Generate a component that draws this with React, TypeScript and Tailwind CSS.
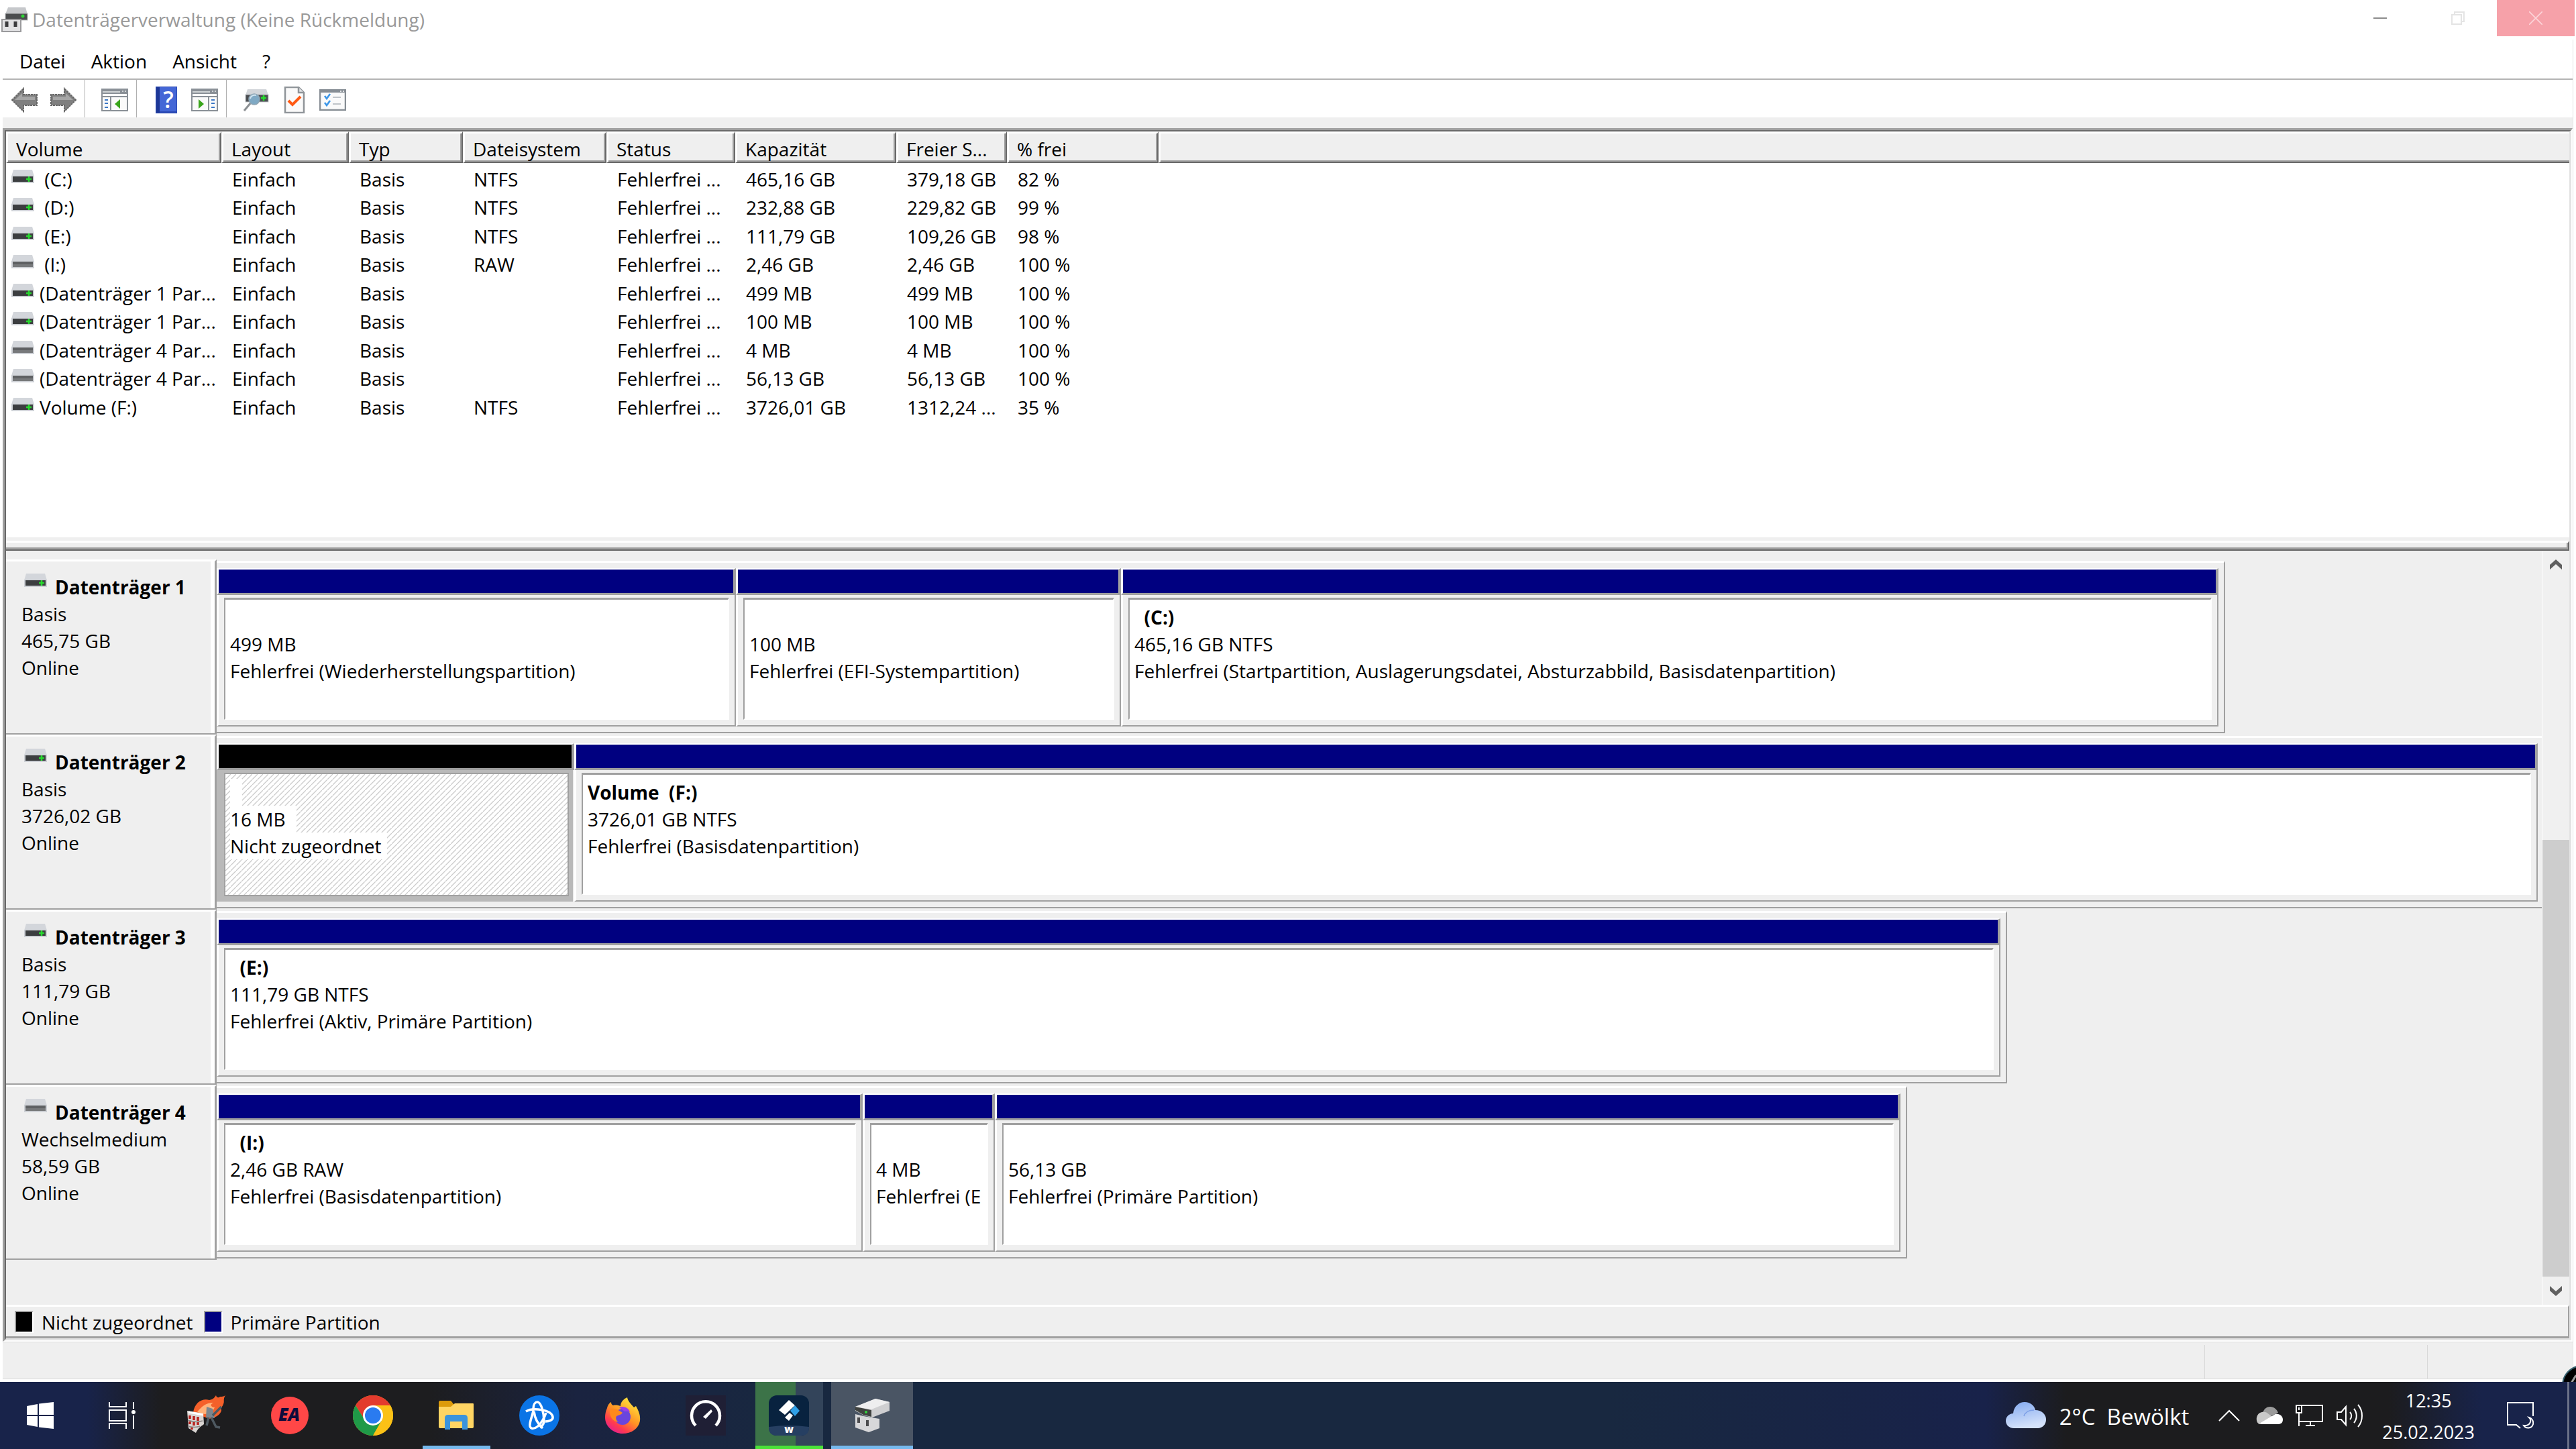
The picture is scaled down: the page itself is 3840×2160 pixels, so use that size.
import type { ReactNode } from "react"

interface Volume {
  name: string
  fileSystem: string
  capacity: string
  free: string
  percent: string
  removable?: boolean
}

interface Partition {
  name?: string
  size: string
  status: string
  weight: number
  unallocated?: boolean
}

interface Disk {
  name: string
  kind: string
  size: string
  removable?: boolean
  // share of the row that stays empty behind the last partition
  rest: number
  partitions: Partition[]
}

const columns = [
  { label: "Volume", width: "w-[321px]" },
  { label: "Layout", width: "w-[190px]" },
  { label: "Typ", width: "w-[170px]" },
  { label: "Dateisystem", width: "w-[214px]" },
  { label: "Status", width: "w-[192px]" },
  { label: "Kapazität", width: "w-[240px]" },
  { label: "Freier S...", width: "w-[165px]" },
  { label: "% frei", width: "w-[226px]" },
]

const volumes: Volume[] = [
  { name: " (C:)", fileSystem: "NTFS", capacity: "465,16 GB", free: "379,18 GB", percent: "82 %" },
  { name: " (D:)", fileSystem: "NTFS", capacity: "232,88 GB", free: "229,82 GB", percent: "99 %" },
  { name: " (E:)", fileSystem: "NTFS", capacity: "111,79 GB", free: "109,26 GB", percent: "98 %" },
  { name: " (I:)", fileSystem: "RAW", capacity: "2,46 GB", free: "2,46 GB", percent: "100 %", removable: true },
  { name: "(Datenträger 1 Par...", fileSystem: "", capacity: "499 MB", free: "499 MB", percent: "100 %" },
  { name: "(Datenträger 1 Par...", fileSystem: "", capacity: "100 MB", free: "100 MB", percent: "100 %" },
  { name: "(Datenträger 4 Par...", fileSystem: "", capacity: "4 MB", free: "4 MB", percent: "100 %", removable: true },
  { name: "(Datenträger 4 Par...", fileSystem: "", capacity: "56,13 GB", free: "56,13 GB", percent: "100 %", removable: true },
  { name: "Volume (F:)", fileSystem: "NTFS", capacity: "3726,01 GB", free: "1312,24 ...", percent: "35 %" },
]

const disks: Disk[] = [
  {
    name: "Datenträger 1",
    kind: "Basis",
    size: "465,75 GB",
    rest: 472,
    partitions: [
      { size: "499 MB", status: "Fehlerfrei (Wiederherstellungspartition)", weight: 774 },
      { size: "100 MB", status: "Fehlerfrei (EFI-Systempartition)", weight: 574 },
      {
        name: "  (C:)",
        size: "465,16 GB NTFS",
        status: "Fehlerfrei (Startpartition, Auslagerungsdatei, Absturzabbild, Basisdatenpartition)",
        weight: 1636,
      },
    ],
  },
  {
    name: "Datenträger 2",
    kind: "Basis",
    size: "3726,02 GB",
    rest: 0,
    partitions: [
      { size: "16 MB", status: "Nicht zugeordnet", weight: 533, unallocated: true },
      { name: "Volume  (F:)", size: "3726,01 GB NTFS", status: "Fehlerfrei (Basisdatenpartition)", weight: 2927 },
    ],
  },
  {
    name: "Datenträger 3",
    kind: "Basis",
    size: "111,79 GB",
    rest: 797,
    partitions: [{ name: "  (E:)", size: "111,79 GB NTFS", status: "Fehlerfrei (Aktiv, Primäre Partition)", weight: 2659 }],
  },
  {
    name: "Datenträger 4",
    kind: "Wechselmedium",
    size: "58,59 GB",
    removable: true,
    rest: 946,
    partitions: [
      { name: "  (I:)", size: "2,46 GB RAW", status: "Fehlerfrei (Basisdatenpartition)", weight: 963 },
      { size: "4 MB", status: "Fehlerfrei (E", weight: 197 },
      { size: "56,13 GB", status: "Fehlerfrei (Primäre Partition)", weight: 1350 },
    ],
  },
]

export default function App() {
  return (
    <div className="flex min-h-screen flex-col bg-white font-['Open_Sans',sans-serif] text-[28px] leading-10 text-black">
      <TitleBar />
      <div className="mr-1 ml-1 flex flex-1 flex-col border-r border-[#e2e2e2]">
        <MenuBar />
        <Toolbar />
        <div className="h-4 bg-[#efefef]" />
        <div className="flex flex-1 flex-col border-t-3 border-r-2 border-b-2 border-l-3 border-t-[#a0a0a0] border-r-white border-b-white border-l-[#a0a0a0]">
          <div className="flex flex-1 flex-col border-t-2 border-r-3 border-b-3 border-l-2 border-t-[#696969] border-r-[#e3e3e3] border-b-[#e3e3e3] border-l-[#696969] bg-[#efefef]">
            <VolumeTable />
            <Splitter />
            <div className="flex flex-1">
              <main className="min-w-0 flex-1 pt-[13px]">
                {disks.map((disk) => (
                  <DiskRow key={disk.name} disk={disk} />
                ))}
              </main>
              <ScrollBar />
            </div>
            <Legend />
          </div>
        </div>
        <StatusBar />
      </div>
      <Taskbar />
    </div>
  )
}

function TitleBar() {
  return (
    <header className="flex h-[59px] items-start">
      <div className="flex h-[54px] flex-1 items-center gap-1.5 pt-1 pl-0.5 text-[#999]">
        <DiskToolIcon />
        <h1>Datenträgerverwaltung (Keine Rückmeldung)</h1>
      </div>
      <button aria-label="Minimieren" className="flex h-[54px] w-[116px] items-center justify-center">
        <span className="h-0.5 w-5 bg-[#8c8c8c]" />
      </button>
      <button aria-label="Verkleinern" className="flex h-[54px] w-[116px] items-center justify-center">
        <svg width="20" height="20" viewBox="0 0 20 20" fill="none" stroke="#e4e4e4" strokeWidth="2">
          <path d="M1 5h14v14H1zM5 5V1h14v14h-4" />
        </svg>
      </button>
      <button aria-label="Schließen" className="mr-0.5 flex h-[54px] w-[116px] items-center justify-center bg-[#f6a1a9]">
        <svg width="20" height="20" viewBox="0 0 20 20" fill="none" stroke="#fcd5d9" strokeWidth="1.6">
          <path d="M0 0l20 20M20 0L0 20" />
        </svg>
      </button>
    </header>
  )
}

function MenuBar() {
  return (
    <nav className="flex h-[60px] items-center border-b-2 border-[#b4b4b4] pt-1.5 pl-1.5">
      {["Datei", "Aktion", "Ansicht", "?"].map((item) => (
        <button key={item} className="px-[19px]">
          {item}
        </button>
      ))}
    </nav>
  )
}

function Toolbar() {
  return (
    <div className="flex h-14 items-center pl-1">
      <ToolButton label="Zurück">
        <svg width="40" height="38" viewBox="0 0 40 38">
          <path d="M1 19L18 2v9h20v16H18v9z" fill="#808080" stroke="#666" strokeWidth="2" strokeDasharray="3 1" />
          <path d="M5 19l11-10v5h19v5z" fill="#a6a6a6" />
        </svg>
      </ToolButton>
      <ToolButton label="Vorwärts">
        <svg width="40" height="38" viewBox="0 0 40 38">
          <path d="M39 19L22 2v9H2v16h20v9z" fill="#808080" stroke="#666" strokeWidth="2" strokeDasharray="3 1" />
          <path d="M35 19L24 9v5H5v5z" fill="#a6a6a6" />
        </svg>
      </ToolButton>
      <ToolSeparator />
      <ToolButton label="Konsolenstruktur">
        <PaneIcon />
      </ToolButton>
      <ToolSeparator />
      <ToolButton label="Hilfe">
        <svg width="32" height="40" viewBox="0 0 32 40" className="overflow-visible">
          <rect width="32" height="40" fill="#2a49b4" />
          <rect x="5" y="1" width="26" height="36" fill="#4467d6" />
          <rect x="1" y="1" width="5" height="38" fill="#1d3796" />
          <text x="19" y="32" textAnchor="middle" fontSize="34" fontWeight="600" fill="#fff" fontFamily="Open Sans">
            ?
          </text>
        </svg>
      </ToolButton>
      <ToolButton label="Aktionsbereich">
        <PaneIcon mirrored />
      </ToolButton>
      <ToolSeparator />
      <ToolButton label="Datenträger neu einlesen">
        <svg width="38" height="34" viewBox="0 0 38 34">
          <path d="M6 1h28l3 9H3z" fill="#d3d6da" />
          <rect x="3" y="9" width="34" height="11" fill="#4a4d50" stroke="#c8ccd0" />
          <path d="M30 10v8M26 14h8" stroke="#25e02c" strokeWidth="2.5" />
          <path d="M11 21L1 33" stroke="#8b8f93" strokeWidth="3" />
          <circle cx="16" cy="16" r="8" fill="#7fa9c4" stroke="#8fa5b3" strokeWidth="1.5" />
          <path d="M10 15a7 6 0 0 1 9-5" stroke="#cfe4f0" strokeWidth="2" fill="none" />
        </svg>
      </ToolButton>
      <ToolButton label="Eigenschaften">
        <svg width="32" height="40" viewBox="0 0 32 40">
          <path d="M2 1h20l8 8v30H2z" fill="#fafafa" stroke="#8f9499" strokeWidth="2.5" />
          <path d="M22 1v8h8" fill="#e4e6e8" stroke="#8f9499" strokeWidth="2.5" />
          <path d="M7 21l6 6 12-12" fill="none" stroke="#ff5a14" strokeWidth="4" />
        </svg>
      </ToolButton>
      <ToolButton label="Liste">
        <svg width="40" height="32" viewBox="0 0 40 32">
          <rect x="1" y="1" width="38" height="30" fill="#fafafa" stroke="#868d94" strokeWidth="2.5" />
          <path d="M1 3h38" stroke="#868d94" strokeWidth="4" />
          <path d="M31 3h2M35 3h2" stroke="#fff" strokeWidth="1.5" />
          <path d="M8 10l3 4 5-7M8 20l3 4 5-7" fill="none" stroke="#3c96e8" strokeWidth="2.6" />
          <path d="M20 12h12M20 22h12" stroke="#bfc4c9" strokeWidth="2" />
        </svg>
      </ToolButton>
    </div>
  )
}

function ToolButton({ label, children }: { label: string; children: ReactNode }) {
  return (
    <button aria-label={label} className="flex h-12 w-[57px] items-center justify-center pt-1">
      {children}
    </button>
  )
}

function ToolSeparator() {
  return <span className="mr-[15px] ml-1 h-full w-px bg-[#b0b0b0]" />
}

function PaneIcon({ mirrored }: { mirrored?: boolean }) {
  return (
    <svg width="40" height="34" viewBox="0 0 40 34">
      <rect x="1" y="1" width="38" height="32" fill="#fafafa" stroke="#8a9097" strokeWidth="2" />
      <rect x="2" y="2" width="36" height="6" fill="#8a9097" />
      <path d="M2 5h26M31 4h2M35 4h2" stroke="#e8eaec" strokeWidth="1.5" />
      <path d="M1 12h38" stroke="#8a9097" strokeWidth="2" />
      {mirrored ? (
        <>
          <path d="M26 12v22" stroke="#8a9097" strokeWidth="2" />
          <path d="M11 16l8 7-8 7z" fill="#3aa51b" />
          <path d="M30 17h5M30 22h5M30 28h5" stroke="#3d78c6" strokeWidth="2" />
        </>
      ) : (
        <>
          <path d="M14 12v22" stroke="#8a9097" strokeWidth="2" />
          <path d="M28 16l-8 7 8 7z" fill="#3aa51b" />
          <path d="M5 17h5M5 22h5M5 28h5" stroke="#3d78c6" strokeWidth="2" />
        </>
      )}
    </svg>
  )
}

function VolumeTable() {
  return (
    <div className="h-[605px] overflow-hidden bg-white">
      <table className="h-[429px] w-full table-fixed border-separate border-spacing-0 text-left leading-9 whitespace-pre">
        <thead>
          <tr className="h-[47px]">
            {columns.map((column) => (
              <th
                key={column.label}
                className={`${column.width} border-t-3 border-r-2 border-b-2 border-l-3 border-t-white border-r-[#696969] border-b-[#696969] border-l-white bg-[#efefef] pt-1 pl-3 font-normal shadow-[inset_-2px_-2px_0_#a0a0a0]`}
              >
                {column.label}
              </th>
            ))}
            <th className="border-t-3 border-b-2 border-l-3 border-t-white border-b-[#696969] border-l-white bg-[#efefef] shadow-[inset_0_-2px_0_#a0a0a0]" />
          </tr>
        </thead>
        <tbody className="align-top">
          {volumes.map((volume, index) => (
            <tr key={index}>
              <td className="pl-2">
                <div className="flex items-start gap-2">
                  <span className="pt-2.5">
                    <DriveIcon removable={volume.removable} />
                  </span>
                  <span className="pt-1.5">{volume.name}</span>
                </div>
              </td>
              <td className="pt-1.5 pl-4">Einfach</td>
              <td className="pt-1.5 pl-4">Basis</td>
              <td className="pt-1.5 pl-4">{volume.fileSystem}</td>
              <td className="pt-1.5 pl-4">Fehlerfrei ...</td>
              <td className="pt-1.5 pl-4">{volume.capacity}</td>
              <td className="pt-1.5 pl-4">{volume.free}</td>
              <td className="pt-1.5 pl-4">{volume.percent}</td>
              <td />
            </tr>
          ))}
        </tbody>
      </table>
    </div>
  )
}

function Splitter() {
  return (
    <div className="pt-[5px]">
      <div className="h-[15px] border-t-3 border-r-2 border-b-2 border-t-white border-r-[#696969] border-b-[#696969] shadow-[inset_-2px_-3px_0_#a0a0a0]" />
    </div>
  )
}

function DiskRow({ disk }: { disk: Disk }) {
  const used = disk.partitions.reduce((sum, partition) => sum + partition.weight, 0)
  const clipped = disk.rest === 0

  return (
    <section className="flex h-[261px]">
      <div className="w-[314px] shrink-0 border-t-3 border-r-3 border-b-2 border-t-white border-r-[#a0a0a0] border-b-[#a0a0a0]">
        <div className="h-full border-r-6 border-white pt-[18px] pl-[23px]">
          <div className="flex items-start gap-3 pl-1">
            <DriveIcon removable={disk.removable} />
            <h2 className="font-bold whitespace-nowrap">{disk.name}</h2>
          </div>
          <p>{disk.kind}</p>
          <p>{disk.size}</p>
          <p>Online</p>
        </div>
      </div>
      <div className="flex min-w-0 flex-1 pt-0.5 pb-0.5">
        <div
          className={`flex min-w-0 border-t-3 border-b-2 border-t-white border-b-[#a0a0a0] py-2 ${
            clipped ? "pr-1.5" : "border-r-2 border-r-[#a0a0a0] pr-2"
          }`}
          style={{ flex: `${used} 1 0` }}
        >
          {disk.partitions.map((partition) => (
            <PartitionBox key={partition.size} partition={partition} />
          ))}
        </div>
        {!clipped && <div style={{ flex: `${disk.rest} 1 0` }} />}
      </div>
    </section>
  )
}

function PartitionBox({ partition }: { partition: Partition }) {
  return (
    <div className="flex min-w-0 flex-col" style={{ flex: `${partition.weight} 1 0` }}>
      <div
        className={`h-10 border-t-2 border-r-4 border-b-3 border-l-3 border-t-white border-r-[#a0a0a0] border-b-[#a0a0a0] border-l-white ${
          partition.unallocated ? "bg-black" : "bg-[#000080]"
        }`}
      />
      {partition.unallocated ? (
        <div className="mr-0.5 flex-1 bg-[#b9b9b9] pt-1 pr-1.5 pb-2 pl-[11px]">
          <div className="h-full border-2 border-[#a0a0a0] bg-white bg-[linear-gradient(135deg,#ffffff_42%,#cccccc_46%,#cccccc_54%,#ffffff_58%)] bg-size-[8px_8px] pt-[7px] pl-[7px]">
            <p className="h-10 w-[18px] bg-white" />
            <p className="w-fit bg-white pr-4">{partition.size}</p>
            <p className="w-fit bg-white pr-2">{partition.status}</p>
          </div>
        </div>
      ) : (
        <div className="flex-1 border-r-2 border-b-2 border-l-3 border-r-[#a0a0a0] border-b-[#a0a0a0] border-l-white pt-1 pr-2 pb-2 pl-2">
          <div className="h-full overflow-hidden border-t-3 border-r-2 border-b-2 border-l-2 border-t-[#a0a0a0] border-r-white border-b-white border-l-[#a0a0a0] bg-white pt-1.5 pl-[7px] whitespace-pre">
            <p className="h-10 font-bold">{partition.name}</p>
            <p>{partition.size}</p>
            <p>{partition.status}</p>
          </div>
        </div>
      )}
    </div>
  )
}

function ScrollBar() {
  return (
    <div className="flex w-[41px] flex-col items-center border-l border-white bg-[#f0f0f0]">
      <button aria-label="Nach oben" className="flex h-[42px] w-full items-center justify-center">
        <svg width="18" height="18" viewBox="0 0 18 18" fill="#606060">
          <path d="M9 1l9 8v7L9 8l-9 8V9z" />
        </svg>
      </button>
      <div className="flex w-full flex-1 flex-col">
        <div className="flex-[389]" />
        <div className="flex-[650] bg-[#cdcdcd]" />
      </div>
      <button aria-label="Nach unten" className="flex h-[42px] w-full items-center justify-center">
        <svg width="18" height="18" viewBox="0 0 18 18" fill="#606060">
          <path d="M9 17l9-8V2l-9 8-9-8v7z" />
        </svg>
      </button>
    </div>
  )
}

function Legend() {
  return (
    <footer className="flex h-[50px] items-center border-t-3 border-r-2 border-b-3 border-t-white border-r-[#a0a0a0] border-b-[#a0a0a0] pl-[13px]">
      <span className="mr-3 h-[33px] w-7 border-t-2 border-r-2 border-b-2 border-l-2 border-t-[#a0a0a0] border-r-white border-b-white border-l-[#a0a0a0] bg-black" />
      <span className="mr-4 pt-0.5">Nicht zugeordnet</span>
      <span className="mr-3 h-[33px] w-7 border-t-2 border-r-2 border-b-2 border-l-2 border-t-[#a0a0a0] border-r-white border-b-white border-l-[#a0a0a0] bg-[#000080]" />
      <span className="pt-0.5">Primäre Partition</span>
    </footer>
  )
}

function StatusBar() {
  return (
    <div className="relative mb-1 flex h-14 border-t border-b border-[#dadada] bg-[#efefef] pt-1">
      <div className="flex-1" />
      <div className="w-[332px] border-l border-[#d8d8d8]" />
      <div className="w-[217px] border-l border-[#d8d8d8]" />
      {/* edge of the floating widget that hangs over the window corner */}
      <div className="absolute -right-[5px] -bottom-[5px] h-[25px] w-[21px] overflow-hidden">
        <svg width="60" height="60" viewBox="0 0 60 60">
          <circle cx="30" cy="30" r="29" fill="#000" stroke="#35606e" strokeWidth="2" />
          <path d="M21 15l-6 10 6 10" fill="none" stroke="#9a9a9a" strokeWidth="3" />
        </svg>
      </div>
    </div>
  )
}

function Taskbar() {
  return (
    <div className="flex h-[100px] items-stretch bg-[linear-gradient(90deg,#18234a_0px,#18234a_130px,#1d1d1f_240px,#1d1d1f_640px,#1a2340_860px,#182840_1200px,#182840_2400px,#18224a_2960px,#1c1c1e_3080px,#1c1c1e_3560px,#18234a_3700px)] text-white">
      <TaskButton label="Start">
        <svg width="40" height="40" viewBox="0 0 40 40" fill="#fff">
          <path d="M0 6l16-3v16H0zM18 2.6l22-2.600v19H18zM0 21h16v16L0 34zM18 21h22v19l-22-2.600z" />
        </svg>
      </TaskButton>
      <TaskButton label="Taskansicht">
        <svg width="40" height="40" viewBox="0 0 40 40" fill="none" stroke="#fff" strokeWidth="2">
          <path d="M1 0v7h25V0M1 12h25v16H1zM1 40v-8h25v8M37 0v10M37 20v20" />
          <circle cx="37" cy="15" r="3" fill="#fff" stroke="none" />
        </svg>
      </TaskButton>
      <div className="w-0.5" />
      <TaskButton label="Nero Burning ROM">
        <svg width="60" height="60" viewBox="0 0 60 60">
          <path d="M10 26C12 10 24 4 34 7c6-1 8-4 10-7 1 4 4 4 6 2 3 0 5 0 8-2-4 6-1 9-3 13-2 5-4 5-3 10-3 8-10 10-18 12z" fill="#f4602a" />
          <path d="M16 25c6-8 13-14 24-14-6 3-3 7 2 7-3 7-9 10-15 10z" fill="#ffb27a" />
          <path d="M1 23l24 4 1 16c-4 3-9 6-12 13L3 49z" fill="#d9d5d3" />
          <path d="M3 25l22 4" stroke="#fff" strokeWidth="3" />
          <path d="M5 30v5M11 31v6M17 32v6M5 39v4M11 40v5M17 40v4M8 48v3" stroke="#b8201c" strokeWidth="3.5" />
          <path d="M2 37c8 3 16 3 22 1M2 46c7 2 13 2 18 0" stroke="#8d8886" strokeWidth="1.5" fill="none" />
          <path d="M30 17l9 3 3 14-13-1z" fill="#7b868e" />
          <path d="M33 33l-3 12M37 33l7 14 6 1M39 30L52 17" stroke="#4e5961" strokeWidth="3.5" fill="none" />
        </svg>
      </TaskButton>
      <TaskButton label="EA">
        <svg width="58" height="58" viewBox="0 0 58 58">
          <circle cx="29" cy="29" r="28" fill="#ff4747" />
          <text x="28" y="37" textAnchor="middle" fontSize="26" fontWeight="800" fontStyle="italic" fill="#0f0c3c" fontFamily="Open Sans">
            EA
          </text>
        </svg>
      </TaskButton>
      <TaskButton label="Google Chrome">
        <svg width="60" height="60" viewBox="0 0 60 60">
          <circle cx="30" cy="30" r="30" fill="#fbc116" />
          <path d="M4 15A30 30 0 0 1 56 15H30L18 37z" fill="#e33b2e" />
          <path d="M4 15a30 30 0 0 0 26 45l13-22.500-25-.500z" fill="#1f9a48" />
          <path d="M30 60a30 30 0 0 0 26-45H30l13 22.500z" fill="#fbc116" />
          <circle cx="30" cy="30" r="15" fill="#fff" />
          <circle cx="30" cy="30" r="12" fill="#2a7bf0" />
        </svg>
      </TaskButton>
      <TaskButton label="Explorer" bar="bg-[#76b9ed]">
        <svg width="54" height="46" viewBox="0 0 54 46">
          <path d="M2 1h17l5 6-4 6H1V3z" fill="#dd9b0a" />
          <path d="M1 10h18l6-5h27q1 0 1 1v34q0 2-2 2H3q-2 0-2-2z" fill="#ffd563" />
          <path d="M10 44V27q0-5 5-5h24q5 0 5 5v17h-8V32H18v12z" fill="#3b94dc" />
        </svg>
      </TaskButton>
      <TaskButton label="Battle.net">
        <svg width="60" height="60" viewBox="0 0 60 60">
          <circle cx="30" cy="30" r="30" fill="#0a74e6" />
          <g fill="none" stroke="#fff" strokeWidth="3.5">
            <path d="M21 20c0-7 3-10 6-10 6 0 10 18 10 28 0 5-3 8-6 10" />
            <path d="M10 24c10-6 38-3 40 8 1 5-6 7-11 7" />
            <path d="M21 22c-1 9-6 17-5 24 1 5 7 4 12 0 6-6 10-14 12-20" />
            <path d="M22 24c1 9 5 18 13 25" />
          </g>
        </svg>
      </TaskButton>
      <TaskButton label="Firefox">
        <svg width="54" height="56" viewBox="0 0 54 56">
          <defs>
            <linearGradient id="fox" x1="0.8" y1="0.1" x2="0.2" y2="1">
              <stop offset="0" stopColor="#ffe13c" />
              <stop offset="0.450" stopColor="#ff9324" />
              <stop offset="0.750" stopColor="#ff3b4e" />
              <stop offset="1" stopColor="#e01a9b" />
            </linearGradient>
          </defs>
          <path d="M4 17c1-5 4-8 6-9 0 3 1 4 3 5 4-1 8 0 11 1C24 8 29 3 34 1c1 6 6 10 10 15l3-2c4 7 7 14 6 22-2 12-13 19-26 19S1 45 1 31c0-5 1-10 3-14z" fill="url(#fox)" />
          <circle cx="27" cy="30" r="12" fill="#6a45dd" />
          <path d="M22 16c8-3 15 2 16 7-3-2-6-1-8-1z" fill="#9b3fe8" />
          <path d="M8 19c6-3 12 0 19 5-3 4-6 3-9 5-2 3 0 7 3 9-9-1-14-9-13-19z" fill="#ff8a1d" />
        </svg>
      </TaskButton>
      <TaskButton label="Speedtest">
        <svg width="60" height="60" viewBox="0 0 60 60">
          <rect width="60" height="60" fill="#1f1f35" />
          <path d="M15 45a21 21 0 1 1 30 0" fill="none" stroke="#fff" strokeWidth="4.5" />
          <path d="M38 21l2 3-10 11-4-3z" fill="#fff" />
        </svg>
      </TaskButton>
      <TaskButton label="Filmora" bar="bg-[#4be238]" fill="bg-[linear-gradient(90deg,#3c7348_59%,#33445a_59%)]">
        <svg width="60" height="60" viewBox="0 0 60 60">
          <rect width="60" height="60" rx="12" fill="#08223f" />
          <path d="M0 47q30-4 60 0v1q0 12-12 12H12Q0 60 0 48z" fill="#263f62" />
          <path d="M30 7l9 8-15 14-9-7zM31 26l5 4-6 8-6-5z" fill="#fff" />
          <path d="M39 15l7 8-7 8-7-8z" fill="#2fa0e8" />
          <text x="30" y="56" textAnchor="middle" fontSize="15" fontWeight="800" fill="#fff" fontFamily="Open Sans">
            w
          </text>
        </svg>
      </TaskButton>
      <TaskButton label="Datenträgerverwaltung" bar="bg-[#76b9ed]" fill="bg-[#4a5564]" wide>
        <svg width="54" height="50" viewBox="0 0 54 50">
          <path d="M2 12L32 0l21 5v13L27 28 15 25 2 18z" fill="#cfcfd1" />
          <path d="M2 12L32 0l21 5-27 11z" fill="#eeeeef" />
          <path d="M2 12l24 5v10l-12-3-12-7z" fill="#3f423f" />
          <circle cx="18" cy="20" r="2" fill="#31d83c" />
          <path d="M2 23l12 3 24 4v14l-16 6L2 43z" fill="#d7d7d9" />
          <path d="M7 28v8M20 32v9" stroke="#4b4b4d" strokeWidth="4" />
        </svg>
      </TaskButton>

      <div className="flex-1" />

      <button className="flex items-center gap-5 pr-11 text-[33px]">
        <svg width="60" height="40" viewBox="0 0 60 40">
          <defs>
            <linearGradient id="cloud" x1="0" y1="0" x2="0.3" y2="1">
              <stop offset="0" stopColor="#82a8ee" />
              <stop offset="1" stopColor="#d4e2fb" />
            </linearGradient>
          </defs>
          <path d="M12 39C4 39 0 33 0 28c0-6 5-11 11-11C12 6 20 0 28 0c9 0 15 6 16 12 9 0 16 6 16 14s-6 13-12 13z" fill="url(#cloud)" />
          <path d="M27 21c2-6 8-9 15-9" stroke="#7c9fe6" strokeWidth="1.5" fill="none" />
        </svg>
        <span className="pt-1 whitespace-pre">2°C  Bewölkt</span>
      </button>
      <button aria-label="Ausgeblendete Symbole" className="mr-6">
        <svg width="32" height="18" viewBox="0 0 32 18" fill="none" stroke="#fff" strokeWidth="2">
          <path d="M1 17L16 2l15 15" />
        </svg>
      </button>
      <button aria-label="OneDrive" className="mr-[19px]">
        <svg width="40" height="26" viewBox="0 0 40 26">
          <path d="M10 9C12 3 16 0 21 0c6 0 10 4 12 9l-13 6z" fill="#9b9b9b" />
          <path d="M9 8c4-1 7 0 10 3l8 6-22 9C-2 23 0 9 9 8z" fill="#c9c9c9" />
          <path d="M5 25l22-13c3-3 13-1 13 7 0 5-3 7-7 7H8z" fill="#fff" />
        </svg>
      </button>
      <button aria-label="Netzwerk" className="mr-5">
        <svg width="41" height="34" viewBox="0 0 41 34" fill="none" stroke="#fff" strokeWidth="2">
          <path d="M10 2h30v24H5M22 26v6M15 32h14M5 13v20" />
          <path d="M1 2h8v11H1zM5 5v4" />
        </svg>
      </button>
      <button aria-label="Lautstärke" className="mr-[26px]">
        <svg width="42" height="36" viewBox="0 0 42 36" fill="none" stroke="#fff" strokeWidth="2">
          <path d="M1 13h6l7-8v27l-7-8H1z" />
          <path d="M20 13c3 3 3 8 0 11M26 8c5 6 5 15 0 21M32 2c8 9 8 24 0 33" />
        </svg>
      </button>
      <button className="flex flex-col justify-center pt-0.5 pr-12 text-center text-[27px] leading-[47px]">
        <time>12:35</time>
        <time>25.02.2023</time>
      </button>
      <button aria-label="Benachrichtigungen" className="pr-[50px]">
        <svg width="40" height="40" viewBox="0 0 40 40" fill="none" stroke="#fff" strokeWidth="2">
          <path d="M39 21V1H1v33h13l6 5" />
          <path d="M33 23c5 5 1 13-8 12 3 5 12 5 14-2 1-5-2-9-6-10z" />
        </svg>
      </button>
      <div className="mr-2.5 w-[3px] bg-[#6a7188]" />
    </div>
  )
}

interface TaskButtonProps {
  label: string
  bar?: string
  fill?: string
  wide?: boolean
  children: ReactNode
}

function TaskButton({ label, bar, fill = "", wide, children }: TaskButtonProps) {
  return (
    <button aria-label={label} className="flex w-[124px] justify-center first:w-[120px]">
      <span className={`flex h-full flex-col ${wide ? "w-[122px]" : "w-[101px]"} ${fill}`}>
        <span className="flex h-[95px] items-center justify-center pt-[5px]">{children}</span>
        <span className={`h-[5px] ${bar ?? ""}`} />
      </span>
    </button>
  )
}

function DriveIcon({ removable }: { removable?: boolean }) {
  return (
    <svg width="34" height="20" viewBox="0 0 34 20">
      <path d="M3 0h28l3 10H0z" fill="#d3d6db" />
      <rect y="9" width="34" height="11" fill="#cdd0d5" />
      <rect x="2" y="10" width="30" height="8" fill={removable ? "#5f6163" : "#3c3e40"} />
      {removable ? (
        <rect x="2" y="14" width="30" height="4" fill="#77797b" />
      ) : (
        <path d="M26 10v8M22 14h8" stroke="#26d92d" strokeWidth="2.5" />
      )}
    </svg>
  )
}

function DiskToolIcon() {
  return (
    <svg width="40" height="38" viewBox="0 0 40 38">
      <path d="M10 1h26l3 10H6z" fill="#c6c8cb" />
      <rect x="6" y="10" width="33" height="10" fill="#4b4d4f" stroke="#b9bbbd" />
      <circle cx="32" cy="14" r="2.5" fill="#2fd636" />
      <rect x="1" y="19" width="28" height="18" fill="#e2e2e4" stroke="#9a9a9c" strokeWidth="2" />
      <path d="M8 22v8M21 22v8" stroke="#3c3c3e" strokeWidth="5" />
    </svg>
  )
}
